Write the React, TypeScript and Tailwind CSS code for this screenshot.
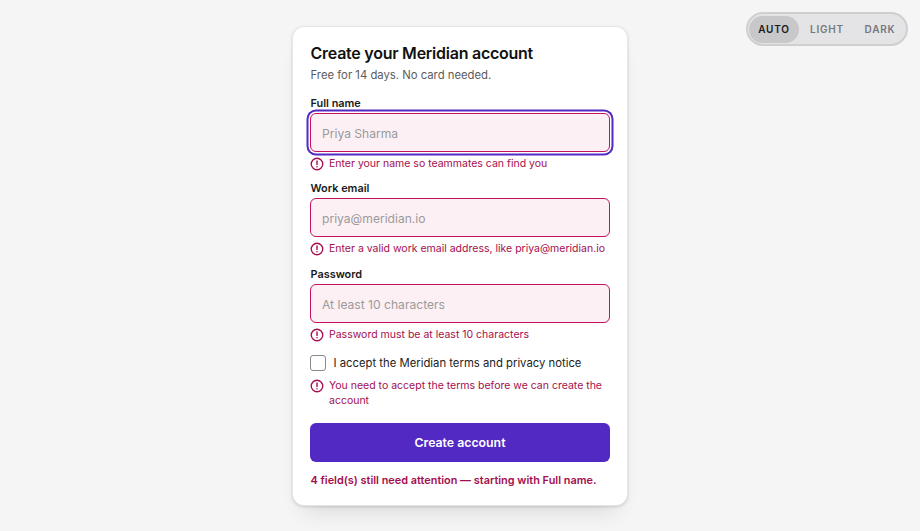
const fields = [
  { label: "Full name", placeholder: "Priya Sharma", error: "Enter your name so teammates can find you", focused: true },
  { label: "Work email", placeholder: "priya@meridian.io", error: "Enter a valid work email address, like priya@meridian.io" },
  { label: "Password", placeholder: "At least 10 characters", error: "Password must be at least 10 characters" },
];

const AlertIcon = () => (
  <svg viewBox="0 0 16 16" fill="none" stroke="currentColor" className="w-[14px] h-[14px] shrink-0 mt-[1px]">
    <circle cx="8" cy="8" r="6.6" strokeWidth="1.5" />
    <path d="M8 4.5v4" strokeWidth="1.6" strokeLinecap="round" />
    <circle cx="8" cy="11.2" r="0.9" fill="currentColor" stroke="none" />
  </svg>
);

const FieldError = ({ children }: { children: string }) => (
  <div className="flex gap-[5px] mt-[4px] text-[10.5px] leading-[15px] text-[#a50e4e]">
    <AlertIcon />
    <span>{children}</span>
  </div>
);

const App = () => {
  return (
    <div className="relative h-[531px] w-[920px] overflow-hidden bg-[#f5f5f5] font-['Inter',sans-serif]">
      {/* Theme switch */}
      <div className="absolute top-[12px] right-[12px] flex h-[34px] items-center rounded-full border-2 border-[#cfcfcf] bg-[#e4e4e6] p-[1px] text-[10px] font-semibold tracking-[0.8px] text-[#77777b]">
        <span className="flex h-[27px] w-[50px] items-center justify-center rounded-full bg-[#c8c8ca] pt-[1px] text-[#1a1a1a]">AUTO</span>
        <span className="flex h-[27px] w-[56px] items-center justify-center pt-[1px]">LIGHT</span>
        <span className="flex h-[27px] w-[50px] items-center justify-center pt-[1px]">DARK</span>
      </div>

      <div className="flex justify-center pt-[26px]">
        <div className="w-[336px] h-[480px] rounded-[12px] border border-[#e6e6e6] bg-white px-[17px] pt-[15px] shadow-[0_1px_3px_rgba(0,0,0,0.15),0_16px_22px_-12px_rgba(0,0,0,0.12)]">
          <h1 className="pl-[0.5px] text-[16px] leading-[22px] font-semibold tracking-[-0.25px] text-[#111]">Create your Meridian account</h1>
          <p className="mt-[3px] pl-[0.5px] text-[11.3px] leading-[16px] text-[#5c5c60]">Free for 14 days. No card needed.</p>

          <div className="mt-[12.7px] flex flex-col gap-[10.5px]">
            {fields.map((f) => (
              <div key={f.label}>
                <label className="block pl-[0.5px] text-[10.9px] leading-[14px] font-semibold text-[#1a1a1a]">{f.label}</label>
                <div
                  className={`mt-[3px] flex h-[39px] items-center rounded-[6px] border border-[#c5115f] bg-[#fdf0f4] px-[11px] pt-[3px] text-[12.1px] text-[#9a9a9a] ${
                    f.focused ? "shadow-[0_0_0_1.5px_#fff,0_0_0_3.5px_#5329c4]" : ""
                  }`}
                >
                  {f.placeholder}
                </div>
                <FieldError>{f.error}</FieldError>
              </div>
            ))}
          </div>

          <div className="mt-[13.3px] flex items-center gap-[7.5px]">
            <span className="h-[16px] w-[16px] rounded-[3px] border-[1.5px] border-[#8a8a8e] bg-white" />
            <span className="text-[11.3px] leading-[16px] text-[#222]">I accept the Meridian terms and privacy notice</span>
          </div>
          <div className="mt-[7px]">
            <FieldError>You need to accept the terms before we can create the account</FieldError>
          </div>

          <button className="mt-[15px] h-[39px] w-full rounded-[6px] bg-[#5329c4] pt-[1px] text-[12.3px] font-semibold text-white">Create account</button>
          <p className="mt-[11px] pl-[0.5px] text-[10.9px] leading-[15px] font-semibold text-[#a50e4e]">4 field(s) still need attention — starting with Full name.</p>
        </div>
      </div>
    </div>
  );
};

export default App;
